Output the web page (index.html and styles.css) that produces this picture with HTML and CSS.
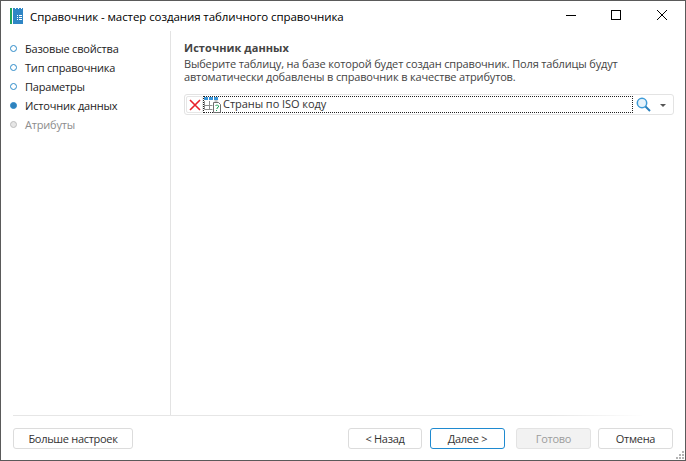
FILE: index.html
```html
<!DOCTYPE html>
<html lang="ru">
<head>
<meta charset="utf-8">
<title>Справочник</title>
<link rel="stylesheet" href="styles.css">
</head>
<body>
<div class="window">
  <header class="titlebar">
    <svg class="appicon" width="16" height="16" viewBox="0 0 16 16">
      <rect x="0" y="0" width="2" height="16" fill="#22a65a"/>
      <path d="M3 0h2v1h1V0h2v1h1V0h2v1h1V0h1v16H3z" fill="#2f86c5"/>
      <path d="M7 7h1v1H7zM9 7h3v1H9zM7 9h1v1H7zM9 9h3v1H9zM7 11h1v1H7zM9 11h3v1H9z" fill="#fff"/>
    </svg>
    <span class="title">Справочник - мастер создания табличного справочника</span>
    <div class="winbtns">
      <svg class="winbtn" width="46" height="30" viewBox="0 0 46 30"><path d="M19 14.500h10" stroke="#000" fill="none"/></svg>
      <svg class="winbtn" width="46" height="30" viewBox="0 0 46 30"><rect x="18.500" y="9.500" width="9" height="9" stroke="#000" fill="none"/></svg>
      <svg class="winbtn" width="46" height="30" viewBox="0 0 46 30"><path d="M18 9l10 10M28 9L18 19" stroke="#000" fill="none"/></svg>
    </div>
  </header>
  <div class="main">
    <nav class="steps">
      <div class="step"><i class="dot"></i>Базовые свойства</div>
      <div class="step"><i class="dot"></i>Тип справочника</div>
      <div class="step"><i class="dot"></i>Параметры</div>
      <div class="step"><i class="dot dot-active"></i>Источник данных</div>
      <div class="step step-off"><i class="dot dot-off"></i>Атрибуты</div>
    </nav>
    <section class="content">
      <h1 class="heading">Источник данных</h1>
      <p class="desc">Выберите таблицу, на базе которой будет создан справочник. Поля таблицы будут автоматически добавлены в справочник в качестве атрибутов.</p>
      <div class="picker">
        <span class="clear">
          <svg width="12" height="12" viewBox="0 0 12 12"><path d="M1 1l10 10M11 1L1 11" stroke="#e8202a" stroke-width="1.6" fill="none"/></svg>
        </span>
        <div class="value">
          <svg class="tableicon" width="18" height="16" viewBox="0 0 18 16">
            <rect x="0" y="0" width="4" height="3" fill="#3a95d8"/>
            <rect x="5" y="0" width="4" height="3" fill="#3a95d8"/>
            <rect x="10" y="0" width="4" height="3" fill="#3a95d8"/>
            <path d="M.500 4v8.500h8M.500 8.500h8M5.500 4v8M10.500 4h3" stroke="#8f8f8f" fill="none"/>
            <path d="M9.500 5.500h5l2 2v8h-7z" fill="#fff" stroke="#6f6f6f"/>
            <path d="M11.500 9l1-1h1l1 1v1l-1.500 1v1M12.500 13v1" stroke="#1fa35a" fill="none"/>
          </svg>
          <span>Страны по ISO коду</span>
        </div>
        <svg class="search" width="15" height="15" viewBox="0 0 15 15">
          <circle cx="6" cy="6" r="4.700" stroke="#3d9bd8" stroke-width="1.500" fill="#e6f3fb"/>
          <path d="M9.500 9.500l4.500 4.500" stroke="#2a80bd" stroke-width="2" fill="none"/>
        </svg>
        <span class="caret"></span>
      </div>
    </section>
  </div>
  <footer class="footer">
    <div class="rule"></div>
    <div class="actions">
      <button class="btn btn-more">Больше настроек</button>
      <div class="spacer"></div>
      <button class="btn btn-back">&lt; Назад</button>
      <button class="btn btn-next">Далее &gt;</button>
      <button class="btn btn-done" disabled>Готово</button>
      <button class="btn btn-cancel">Отмена</button>
    </div>
  </footer>
  <svg class="grip" width="10" height="10" viewBox="0 0 10 10">
    <path d="M7 1h2v2H7zM4 4h2v2H4zM7 4h2v2H7zM1 7h2v2H1zM4 7h2v2H4zM7 7h2v2H7z" fill="#b4b4b4"/>
  </svg>
</div>
</body>
</html>
```
FILE: styles.css
```css
* { box-sizing: border-box; }
html, body { margin: 0; padding: 0; }
body {
  width: 686px;
  height: 461px;
  overflow: hidden;
  background: #fff;
  font-family: "Open Sans", "Noto Sans", sans-serif;
  font-size: 11px;
  color: #333;
}
.window {
  position: relative;
  width: 686px;
  height: 461px;
  border: 1px solid #5a5a5a;
  display: flex;
  flex-direction: column;
  background: #fff;
}
.titlebar {
  height: 30px;
  flex: none;
  display: flex;
  align-items: center;
  padding-left: 9px;
}
.appicon { flex: none; margin-top: -1px; }
.title {
  margin-left: 4px;
  font-size: 11.5px;
  letter-spacing: -0.08px;
  color: #000;
  white-space: nowrap;
}
.winbtns { margin-left: auto; display: flex; }
.winbtn { display: block; }
.main { flex: 1; display: flex; min-height: 0; }
.steps {
  width: 170px;
  flex: none;
  border-right: 1px solid #e3e3e3;
  padding-top: 8px;
}
.step {
  height: 19px;
  display: flex;
  align-items: center;
  padding-left: 9px;
  color: #222;
  letter-spacing: -0.19px;
  white-space: nowrap;
}
.step-off { color: #8c8c8c; }
.dot {
  width: 7px;
  height: 7px;
  border-radius: 50%;
  border: 1px solid #2e8bc9;
  margin-right: 8px;
  flex: none;
}
.dot-active { background: #2e82bd; }
.dot-off { border-color: #bdbdbd; background: #e6e6e6; }
.content { flex: 1; padding: 9px 11px 0 13px; min-width: 0; }
.heading {
  margin: 0;
  font-size: 11px;
  font-weight: 700;
  letter-spacing: 0.07px;
  line-height: 15px;
  color: #444;
}
.desc {
  margin: 2px 0 0;
  line-height: 13px;
  letter-spacing: -0.16px;
  color: #444;
  width: 470px;
}
.picker {
  margin-top: 11px;
  height: 21px;
  border: 1px solid #e3e3e3;
  border-radius: 3px;
  display: flex;
  align-items: center;
  padding-left: 1px;
}
.clear {
  width: 17px;
  height: 17px;
  flex: none;
  display: flex;
  align-items: center;
  justify-content: center;
  border: 1px solid #e6e6e6;
  border-radius: 2px;
}
.value {
  flex: 1;
  height: 17px;
  display: flex;
  align-items: center;
  border: 1px dotted #222;
  color: #333;
  min-width: 0;
}
.tableicon { flex: none; margin-top: 1px; }
.value span { margin: -2px 0 0 1px; letter-spacing: -0.05px; white-space: nowrap; }
.search { margin-left: 3px; flex: none; }
.caret {
  flex: none;
  width: 0;
  height: 0;
  margin: 1px 7px 0 9px;
  border-left: 3px solid transparent;
  border-right: 3px solid transparent;
  border-top: 3px solid #555;
}
.footer { flex: none; height: 45px; }
.rule {
  height: 1px;
  margin: 0 40px 0 12px;
  background: linear-gradient(to right, #e6e6e6, #e6e6e6 85%, #fff);
}
.actions {
  display: flex;
  padding: 12px 12px 0 12px;
}
.spacer { flex: 1; }
.btn {
  height: 21px;
  padding: 0;
  border: 1px solid #dcdcdc;
  border-radius: 3px;
  background: #fff;
  font: inherit;
  letter-spacing: -0.3px;
  color: #333;
}
.btn-more { width: 120px; }
.btn-back { width: 74px; }
.btn-next { width: 75px; margin-left: 8px; border-color: #1f8ad0; }
.btn-done { width: 75px; margin-left: 11px; background: #f2f2f2; color: #9c9c9c; border-color: #e3e3e3; }
.btn-cancel { width: 75px; margin-left: 7px; }
.grip { position: absolute; right: 0; bottom: 0; }
```
